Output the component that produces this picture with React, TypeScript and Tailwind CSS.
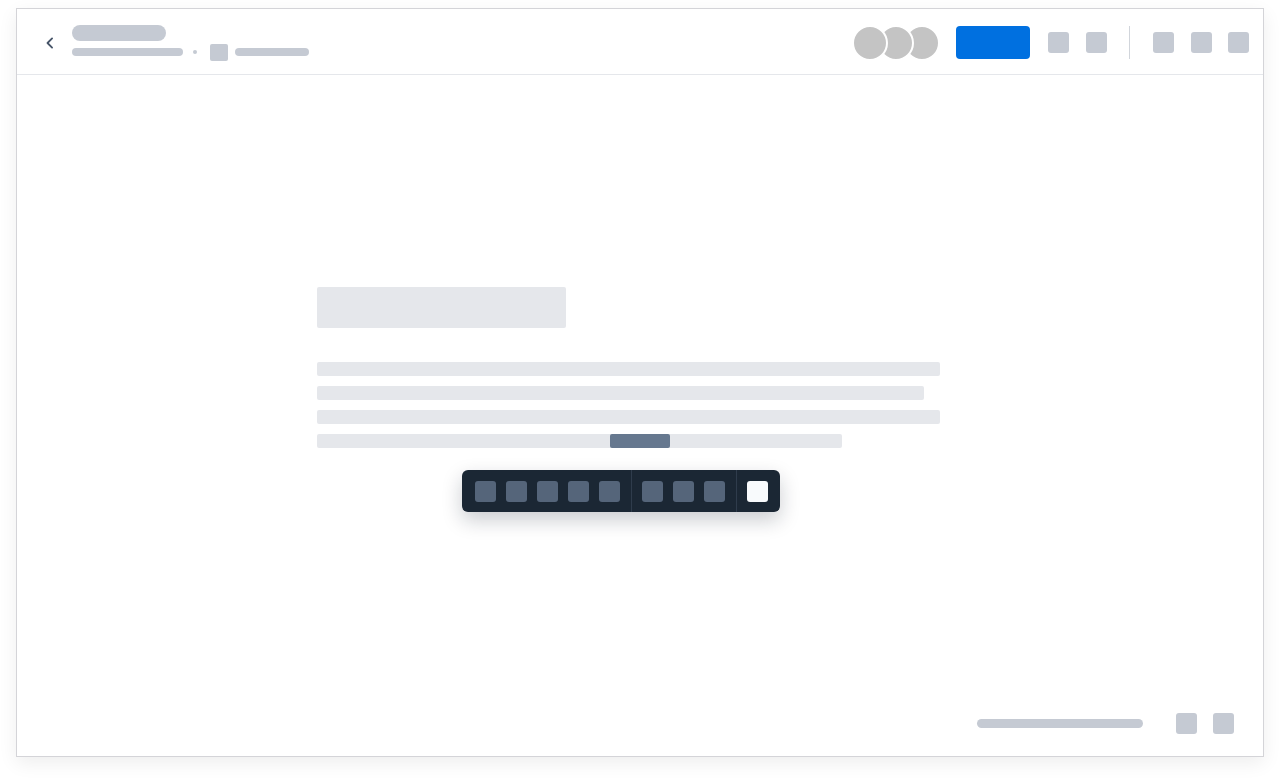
import React from "react";

const Sq = ({ c = "bg-[#c5cad3]" }: { c?: string }) => (
  <div className={`w-[21px] h-[21px] rounded-[3px] ${c}`} />
);

export default function App() {
  return (
    <div className="w-[1280px] h-[781px] bg-white pt-[8px] pl-[16px] font-['Inter',sans-serif]">
      <div className="w-[1248px] h-[749px] border border-[#d4d4d8] bg-white shadow-[0_6px_18px_rgba(0,0,0,0.07)] flex flex-col">
        {/* Header */}
        <div className="h-[66px] border-b border-[#e5e7eb] flex items-center pt-[2px] pl-[23px] pr-[14px] shrink-0">
          <svg width="20" height="20" viewBox="0 0 24 24" fill="none" stroke="#475569" strokeWidth="2.2" strokeLinecap="round" strokeLinejoin="round">
            <path d="m14.5 17.5-5.5-5.5 5.5-5.5" />
          </svg>
          <div className="ml-[12px] flex flex-col">
            <div className="w-[94px] h-[16px] rounded-full bg-[#c5cad3]" />
            <div className="mt-[3px] flex items-center h-[17px]">
              <div className="w-[111px] h-[8px] rounded-full bg-[#c5cad3]" />
              <div className="ml-[10px] w-[4px] h-[4px] rounded-full bg-[#c5cad3]" />
              <div className="ml-[13px] w-[18px] h-[17px] rounded-[2px] bg-[#c5cad3]" />
              <div className="ml-[7px] w-[74px] h-[8px] rounded-full bg-[#c5cad3]" />
            </div>
          </div>
          <div className="ml-auto flex items-center">
            <div className="flex -space-x-[10px]">
              <div className="relative z-30 w-[36px] h-[36px] rounded-full bg-[#c4c4c4] border-2 border-white" />
              <div className="relative z-20 w-[36px] h-[36px] rounded-full bg-[#c4c4c4] border-2 border-white" />
              <div className="relative z-10 w-[36px] h-[36px] rounded-full bg-[#c4c4c4] border-2 border-white" />
            </div>
            <div className="ml-[16px] w-[74px] h-[33px] rounded-[4px] bg-[#0070e0]" />
            <div className="ml-[18px] flex gap-[17px]">
              <Sq />
              <Sq />
            </div>
            <div className="ml-[22px] w-px h-[33px] bg-[#d1d5db]" />
            <div className="ml-[23px] flex">
              <Sq />
              <div className="ml-[17px]">
                <Sq />
              </div>
              <div className="ml-[16px]">
                <Sq />
              </div>
            </div>
          </div>
        </div>

        {/* Content */}
        <div className="flex-1 pl-[300px] pt-[212px]">
          <div className="w-[249px] h-[41px] rounded-[2px] bg-[#e5e7eb]" />
          <div className="mt-[34px] flex flex-col gap-[10px]">
            <div className="w-[623px] h-[14px] rounded-[2px] bg-[#e5e7eb]" />
            <div className="w-[607px] h-[14px] rounded-[2px] bg-[#e5e7eb]" />
            <div className="w-[623px] h-[14px] rounded-[2px] bg-[#e5e7eb]" />
            <div className="w-[525px] h-[14px] rounded-[2px] bg-[#e5e7eb] flex">
              <div className="ml-[293px] w-[60px] h-[14px] rounded-[2px] bg-[#66788f]" />
            </div>
          </div>
          <div className="mt-[22px] ml-[145px] w-[318px] h-[42px] rounded-[6px] bg-[#1b2734] shadow-[0_8px_20px_rgba(15,23,42,0.22)] flex items-center pl-[13px]">
            <div className="flex gap-[10px]">
              <Sq c="bg-[#55657a]" />
              <Sq c="bg-[#55657a]" />
              <Sq c="bg-[#55657a]" />
              <Sq c="bg-[#55657a]" />
              <Sq c="bg-[#55657a]" />
            </div>
            <div className="ml-[11px] w-px h-[42px] bg-[#2f3c4c]" />
            <div className="ml-[10px] flex gap-[10px]">
              <Sq c="bg-[#55657a]" />
              <Sq c="bg-[#55657a]" />
              <Sq c="bg-[#55657a]" />
            </div>
            <div className="ml-[11px] w-px h-[42px] bg-[#2f3c4c]" />
            <div className="ml-[10px]">
              <Sq c="bg-[#f8fafc]" />
            </div>
          </div>
        </div>

        {/* Footer */}
        <div className="flex items-center justify-end pr-[29px] pb-[22px] shrink-0">
          <div className="w-[166px] h-[9px] rounded-full bg-[#c5cad3]" />
          <div className="ml-[33px] flex gap-[16px]">
            <Sq />
            <Sq />
          </div>
        </div>
      </div>
    </div>
  );
}
